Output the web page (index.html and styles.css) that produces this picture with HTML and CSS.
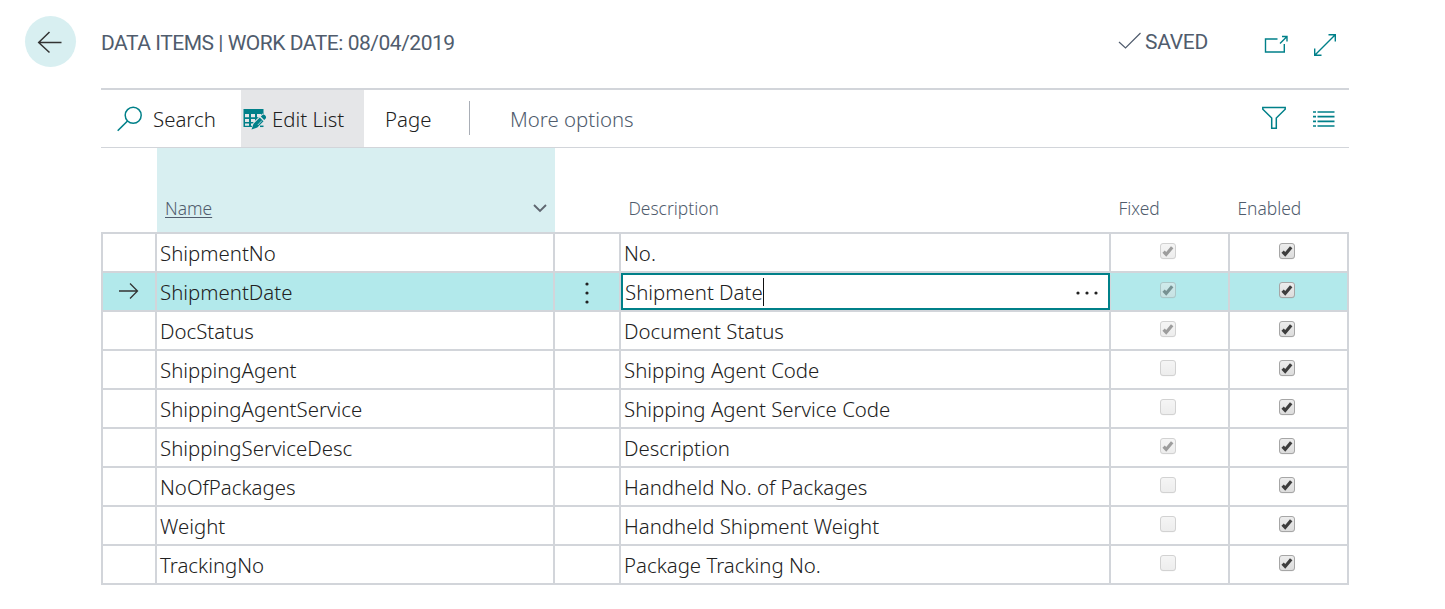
FILE: index.html
```html
<!DOCTYPE html>
<html lang="en">
<head>
<meta charset="utf-8">
<title>Data Items</title>
<link rel="stylesheet" href="styles.css">
</head>
<body>
<svg width="0" height="0" class="defs">
  <defs>
    <linearGradient id="box-fill" x1="0" y1="0" x2="0" y2="1"><stop offset="0" stop-color="#ededed"/><stop offset="1" stop-color="#dcdcdc"/></linearGradient>
    <symbol id="box" viewBox="0 0 18 18">
      <rect x="1.5" y="2.2" width="15" height="15" rx="2.5" fill="#000" opacity=".15"/>
      <rect x="1.5" y="1.5" width="15" height="15" rx="2.5" fill="url(#box-fill)" stroke="#a6a6a6"/>
    </symbol>
    <symbol id="box-checked" viewBox="0 0 18 18">
      <use href="#box"/>
      <path d="M4.6 9.6 7.2 12.4 13.2 5.2" fill="none" stroke="#3d3d3d" stroke-width="3.2"/>
    </symbol>
  </defs>
</svg>
<header class="page-header">
  <div class="back"><svg width="26" height="24" viewBox="0 0 26 24"><path d="M24.500 12.500H2M12.500 2 1.700 12.500 12.500 22.500" fill="none" stroke="#333" stroke-width="1.5"/></svg></div>
  <h1 class="title">DATA ITEMS | WORK DATE: 08/04/2019</h1>
  <div class="saved"><svg width="24" height="18" viewBox="0 0 24 18"><path d="M1 10 7.500 16 22.500 1" fill="none" stroke="#505c6d" stroke-width="1.2"/></svg><span>SAVED</span></div>
  <svg class="icon-popout" width="26" height="20" viewBox="0 0 26 20"><path d="M14.500 5H2.500V18H21.300V10M17 9.500 23.500 3M19 2.500H24V7.500" fill="none" stroke="#008089" stroke-width="1.400"/></svg>
  <svg class="icon-expand" width="24" height="24" viewBox="0 0 24 24"><path d="M2 22 22 2M15.500 1.700H22.300V8.500M1.700 15.500V22.300H8.500" fill="none" stroke="#008089" stroke-width="1.400"/></svg>
</header>
<main class="content">
  <nav class="toolbar">
    <div class="action search"><svg width="26" height="26" viewBox="0 0 26 26"><circle cx="16.200" cy="9.300" r="8" fill="none" stroke="#008089" stroke-width="1.500"/><path d="M10.500 15 .7 24.800" stroke="#008089" stroke-width="1.600"/></svg><span>Search</span></div>
    <div class="action edit"><svg width="24" height="22" viewBox="0 0 24 22"><path d="M.5 1H20.500V7.500L12 19H.5Z" fill="#008089"/><path d="M2 6H6V9.300H2ZM8 6H12V9.300H8ZM14 6H18V9.300H14ZM2 11H6V14H2ZM8 11H12V14H8ZM2 15.500H6V17.700H2ZM8 15.500H12V17.700H8Z" fill="#e5e6e8"/><path d="M8 22.200 9.800 15 19.500 5.500 24 9 14 19.700Z" fill="#e5e6e8"/><path d="M8.500 21.500 10.500 15.800 16.800 9.500 20.500 13.200 14.300 19.500ZM17.800 8.600 19.700 6.700Q20.800 6 22 7.300 23.700 9 22.700 10.500L21.200 12Z" fill="#008089"/><path d="M14.800 17 19 12.500" stroke="#b3d5d9" stroke-width="1"/><path d="M17 18.300H20.500" stroke="#008089" stroke-width="1.500"/></svg><span>Edit List</span></div>
    <div class="action page">Page</div>
    <div class="divider"></div>
    <div class="action more">More options</div>
    <svg class="icon-filter" width="26" height="24" viewBox="0 0 26 24"><path d="M1.800 1.500H24.200V3.200L15.300 12V22.300H10.700V12L1.800 3.200Z" fill="none" stroke="#008089" stroke-width="1.500"/></svg>
    <svg class="icon-list" width="22" height="18" viewBox="0 0 22 18"><path d="M0 2H3M4.500 2H21.500M0 6.600H3M4.500 6.600H21.500M0 11.300H3M4.500 11.300H21.500M0 16H3M4.500 16H21.500" stroke="#008089" stroke-width="1.700"/></svg>
  </nav>
  <div class="columns">
    <span></span>
    <span class="col-name"><u>Name</u><svg width="14" height="9" viewBox="0 0 14 9"><path d="M1 1 7 7 13 1" fill="none" stroke="#5f6670" stroke-width="1.900"/></svg></span>
    <span></span>
    <span class="col-desc">Description</span>
    <span class="col-flag">Fixed</span>
    <span class="col-flag">Enabled</span>
  </div>
  <div class="rows" id="rows"></div>
</main>
<script src="app.js"></script>
</body>
</html>
```
FILE: app.js
```js
const items = [
  ["ShipmentNo", "No.", true],
  ["ShipmentDate", "Shipment Date", true],
  ["DocStatus", "Document Status", true],
  ["ShippingAgent", "Shipping Agent Code", false],
  ["ShippingAgentService", "Shipping Agent Service Code", false],
  ["ShippingServiceDesc", "Description", true],
  ["NoOfPackages", "Handheld No. of Packages", false],
  ["Weight", "Handheld Shipment Weight", false],
  ["TrackingNo", "Package Tracking No.", false]
];
const selected = 1;
const box = (checked, cls) =>
  `<div class="cell flag"><svg class="${cls}" width="18" height="18"><use href="#${checked ? "box-checked" : "box"}"/></svg></div>`;
const arrow = '<svg width="20" height="18" viewBox="0 0 20 18"><path d="M0 9H18.500M11 1.500 18.500 9 11 16.500" fill="none" stroke="#333" stroke-width="1.300"/></svg>';
const dotsV = '<svg width="4" height="22" viewBox="0 0 4 22"><g fill="#212121"><circle cx="2" cy="2" r="1.600"/><circle cx="2" cy="11" r="1.600"/><circle cx="2" cy="20" r="1.600"/></g></svg>';
const dotsH = '<svg width="22" height="4" viewBox="0 0 22 4"><g fill="#212121"><circle cx="2" cy="2" r="1.600"/><circle cx="11" cy="2" r="1.600"/><circle cx="20" cy="2" r="1.600"/></g></svg>';

document.getElementById("rows").innerHTML = items.map(([name, desc, fixed], i) => {
  const on = i === selected;
  const description = on
    ? `<div class="cell editor"><span>${desc}</span><i class="caret"></i>${dotsH}</div>`
    : `<div class="cell text">${desc}</div>`;
  return `<div class="row${on ? " selected" : ""}">
    <div class="cell marker">${on ? arrow : ""}</div>
    <div class="cell text">${name}</div>
    <div class="cell menu">${on ? dotsV : ""}</div>
    ${description}${box(fixed, "disabled")}${box(true, "enabled")}
  </div>`;
}).join("");
```
FILE: styles.css
```css
* { box-sizing: border-box; }
body {
  margin: 0;
  width: 1445px;
  height: 609px;
  overflow: hidden;
  background: #fff;
  color: #212121;
  font: 350 20.4px/28px "Noto Sans", "Open Sans", sans-serif;
}
svg { display: block; flex: none; }
.defs { position: absolute; }

.page-header { display: flex; height: 88px; padding: 16px 0 0 25px; color: #505c6d; }
.back { display: flex; align-items: center; justify-content: center; width: 51px; height: 51px; padding-right: 1px; border-radius: 50%; background: #d8eff1; }
.title { margin: 12px 0 0 25px; width: 1017px; font: 450 21px/30px Roboto, sans-serif; letter-spacing: -.47px; white-space: nowrap; }
.saved { display: flex; width: 145px; font: 450 21px/30px Roboto, sans-serif; letter-spacing: -.3px; padding-top: 11px; }
.saved svg { margin: 5px 3px 0 0; }
.icon-popout { margin-top: 18px; }
.icon-expand { margin: 17px 0 0 24px; }

.content { width: 1248px; margin-left: 101px; }
.toolbar { display: flex; align-items: center; height: 60px; border-top: 2px solid #d2d5da; border-bottom: 1px solid #d2d5da; }
.action { display: flex; align-items: center; height: 100%; white-space: nowrap; }
.search { width: 140px; padding-left: 16px; }
.search svg { margin: 0 10px 0 0; }
.edit { width: 123px; padding-left: 2px; background: #e5e6e8; }
.edit svg { margin: 1px 5px 0 0; }
.page { width: 105px; padding-left: 21px; }
.divider { width: 1px; height: 34px; margin: 0 40px 2px 0; background: #a9aeb6; }
.more { width: 751px; color: #505c6d; }
.icon-filter { margin-bottom: 1px; }
.icon-list { margin: 0 0 0 26px; }

.columns { display: grid; grid-template-columns: 56px 398px 66px 490px 119px 119px; height: 84px; color: #505c6d; font-size: 17.400px; line-height: 24px; }
.columns > span { padding-top: 48px; }
.columns .col-name { display: flex; justify-content: space-between; padding: 48px 8px 0; background: #d8eff1; }
.col-name u { text-decoration-thickness: 1px; text-underline-offset: 2px; }
.col-name svg { margin-top: 8px; }
.columns .col-desc { padding-left: 7.500px; }
.columns .col-flag { padding-left: 7.500px; }

.rows { border: solid #d2d5da; border-width: 2px 0 0 2px; }
.row { display: grid; grid-template-columns: 54px 398px 66px 490px 119px 119px; height: 39px; }
.cell { border: solid #d2d5da; border-width: 0 2px 2px 0; }
.text { padding: 5px 0 0 3px; white-space: nowrap; }
.marker { padding: 9px 0 0 16px; }
.menu { padding: 9px 0 0 30px; }
.flag { padding: 8px 0 0 48px; }
.disabled { opacity: .5; }
.selected { background: #b2e9eb; }
.selected .cell { background: #b2e9eb; }
.selected .editor { display: flex; width: 489px; height: 37px; padding: 3px 10px 0 2px; border: 2px solid #008089; background: #fff; box-shadow: 0 2px #d2d5da, 1px 2px #d2d5da; white-space: nowrap; }
.caret { width: 1px; height: 28px; background: #111; }
.editor svg { margin: 13px 0 0 auto; }
```
